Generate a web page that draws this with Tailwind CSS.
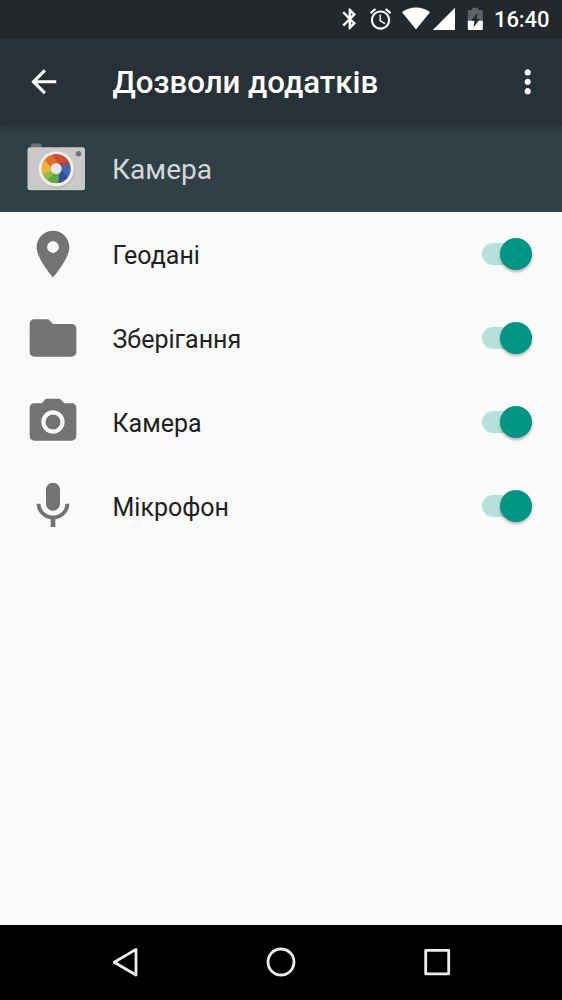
<!DOCTYPE html>
<html lang="uk">
<head>
  <meta charset="UTF-8">
  <title>Дозволи додатків</title>
  <script src="https://cdn.jsdelivr.net/npm/@tailwindcss/browser@4"></script>
</head>

<body class="w-[562px] h-[1000px] flex flex-col overflow-hidden bg-[#fafafa] font-['Roboto',sans-serif]">

  <!-- Status bar -->
  <div class="h-[38px] shrink-0 bg-[#22282b] flex items-center text-white">
    <svg class="ml-[338px] w-[224px] h-[38px]" viewBox="338 0 224 38" fill="currentColor">
      <path stroke="currentColor" stroke-width=".4" transform="translate(337.4 6.4) scale(1.04)" d="M17.71 7.71L12 2h-1v7.59L6.41 5 5 6.41 10.59 12 5 17.59 6.41 19 11 14.41V22h1l5.71-5.71-4.3-4.29 4.3-4.29zM13 5.83l1.88 1.88L13 9.59V5.83zm1.88 10.46L13 18.17v-3.76l1.88 1.88z"/>
      <path transform="translate(367.7 6.2) scale(1.07)" d="M22 5.72l-4.6-3.86-1.29 1.53 4.6 3.86L22 5.72zM7.88 3.39L6.6 1.86 2 5.71l1.29 1.53 4.59-3.85zM12.5 8H11v6l4.75 2.85.75-1.23-4-2.37V8zM12 4c-4.97 0-9 4.03-9 9s4.02 9 9 9c4.97 0 9-4.03 9-9s-4.03-9-9-9zm0 16c-3.87 0-7-3.13-7-7s3.13-7 7-7 7 3.13 7 7-3.13 7-7 7z"/>
      <path d="M416 29.6L402 12.2C406 9.2 411 7.6 416 7.6s10 1.6 14 4.6z"/>
      <path d="M455 7.8V30h-22.2z"/>
      <path class="fill-[#5d6264]" d="M467.8 11.2q0-1.2 1.2-1.2h3.2V7.7h6V10h3.400q1.2 0 1.2 1.2V22h-15z"/>
      <path d="M467.8 20.800h15v8q0 1.2-1.2 1.2H469q-1.2 0-1.2-1.2z"/>
      <path class="fill-[#22282b]" d="M477.600 12.500l-6.400 8.300h3.300l-1 6.700 6.400-8.400h-3.400z"/>
      <text x="494" y="27.3" font-size="22" font-weight="500" textLength="55.5">16:40</text>
    </svg>
  </div>

  <!-- Toolbar -->
  <header class="h-[88px] shrink-0 bg-[#273238] flex items-center text-white shadow-[0_1px_4px_rgba(0,0,0,0.3)] z-10">
    <svg class="ml-[25px] w-[37.5px] h-[37.5px] mb-px" viewBox="0 0 24 24" fill="currentColor"><path d="M20 11H7.83l5.59-5.59L12 4l-8 8 8 8 1.41-1.41L7.83 13H20v-2z"/></svg>
    <h1 class="ml-[50px] pt-0.5 text-[31.2px] font-medium leading-none whitespace-nowrap">Дозволи додатків</h1>
    <svg class="ml-auto mr-[16px] mb-px w-[37.5px] h-[37.5px]" viewBox="0 0 24 24" fill="currentColor"><path d="M12 8c1.1 0 2-.9 2-2s-.9-2-2-2-2 .9-2 2 .9 2 2 2zm0 2c-1.1 0-2 .9-2 2s.9 2 2 2 2-.9 2-2-.9-2-2-2zm0 6c-1.1 0-2 .9-2 2s.9 2 2 2 2-.9 2-2-.9-2-2-2z"/></svg>
  </header>

  <!-- App header -->
  <div class="h-[86px] shrink-0 bg-[#313f47] flex items-center">
    <svg class="ml-[25px] w-[64px] h-[64px]" viewBox="25 137 64 64">
      <path fill="#6d7377" d="M31 146v-1q0-1.500 1.500-1.500h7.500q1.500 0 1.500 1.500v3H31z"/>
      <rect x="27.500" y="148.500" width="57.500" height="43" rx="2.500" fill="#222d33" opacity=".6"/>
      <rect x="27.500" y="147.300" width="57.500" height="43" rx="2.500" fill="#c9c9c9"/>
      <circle cx="78.500" cy="153.800" r="2.700" fill="#747474"/>
      <circle cx="57.300" cy="170.500" r="17.800" fill="#b9b9b9"/>
      <circle cx="56.300" cy="169" r="17.600" fill="#eeeeee"/>
      <!-- lens blades -->
      <g transform="translate(56.200 168.700)">
        <circle r="14.400" fill="#d4543a"/>
        <path fill="#e0702f" d="M-10 -10.400A14.400 14.400 0 0 1-2-14.260L3-5.500L-5-2z"/>
        <path fill="#cf4a38" d="M-4-13.800A14.400 14.400 0 0 1 12.500-7.200L2-5.500z"/>
        <path fill="#e8872f" d="M-10-10.400L-5 1L-14.100-2.800A14.400 14.400 0 0 1-10-10.400z"/>
        <path fill="#efb53a" d="M-12.200-7.700A14.400 14.400 0 0 0-13.300 5.500L-4 4L-5-2z"/>
        <path fill="#8bbf45" d="M-13.300 5.500A14.400 14.400 0 0 0-7 12.600L0 5.500L-5 2z"/>
        <path fill="#63a846" d="M-9 11.240A14.400 14.400 0 0 0 3 14.080L5 2L-2 5z"/>
        <path fill="#3d68ba" d="M2.500 14.180A14.400 14.400 0 0 0 14.400 0L13.600-4.700L4-4L5 3z"/>
        <path fill="#354f9f" d="M2.500 14.180A14.400 14.400 0 0 0 11.500 8.670L5.300 1L3 6z"/>
        <path fill="#a9474e" d="M13.900-3.800A14.400 14.400 0 0 0 12.200-7.600L2-5.500L5-2.500z"/>
        <circle r="5.500" fill="#e6e6e6"/>
      </g>
    </svg>
    <h2 class="ml-[23px] pt-[3px] text-[28.1px] leading-none text-[#d3d7da]">Камера</h2>
  </div>

  <!-- Permissions -->
  <main class="grow text-[#212121] text-[25px] leading-none">
    <div class="h-[84px] flex items-center">
      <svg class="ml-[25px] w-[56px] h-[56px] fill-[#737373]" viewBox="0 0 24 24"><path d="M12 2C8.130 2 5 5.130 5 9c0 5.250 7 13 7 13s7-7.750 7-13c0-3.870-3.130-7-7-7zm0 9.500c-1.380 0-2.500-1.120-2.500-2.500s1.120-2.500 2.500-2.500 2.500 1.120 2.500 2.500-1.120 2.500-2.500 2.500z"/></svg>
      <span class="ml-[31.5px] pt-0.5">Геодані</span>
      <div class="ml-auto mr-[30px] w-[50px] h-[22px] flex items-center justify-end rounded-full bg-[#b8e0db]">
        <div class="w-8 h-8 shrink-0 rounded-full bg-[#009485] shadow-[0_2px_3px_rgba(0,0,0,0.3)]"></div>
      </div>
    </div>
    <div class="h-[84px] flex items-center">
      <svg class="ml-[25px] w-[56px] h-[56px] fill-[#737373]" viewBox="0 0 24 24"><path d="M10 4H4c-1.100 0-1.990.9-1.990 2L2 18c0 1.100.9 2 2 2h16c1.100 0 2-.9 2-2V8c0-1.100-.9-2-2-2h-8l-2-2z"/></svg>
      <span class="ml-[31.5px] pt-0.5">Зберігання</span>
      <div class="ml-auto mr-[30px] w-[50px] h-[22px] flex items-center justify-end rounded-full bg-[#b8e0db]">
        <div class="w-8 h-8 shrink-0 rounded-full bg-[#009485] shadow-[0_2px_3px_rgba(0,0,0,0.3)]"></div>
      </div>
    </div>
    <div class="h-[84px] flex items-center">
      <svg class="ml-[25px] w-[56px] h-[56px] fill-[#737373]" viewBox="0 0 24 24"><circle cx="12" cy="12" r="3.200"/><path d="M9 2L7.170 4H4c-1.100 0-2 .9-2 2v12c0 1.100.9 2 2 2h16c1.100 0 2-.9 2-2V6c0-1.100-.9-2-2-2h-3.170L15 2H9zm3 15c-2.760 0-5-2.240-5-5s2.240-5 5-5 5 2.240 5 5-2.240 5-5 5z"/></svg>
      <span class="ml-[31.5px] pt-0.5">Камера</span>
      <div class="ml-auto mr-[30px] w-[50px] h-[22px] flex items-center justify-end rounded-full bg-[#b8e0db]">
        <div class="w-8 h-8 shrink-0 rounded-full bg-[#009485] shadow-[0_2px_3px_rgba(0,0,0,0.3)]"></div>
      </div>
    </div>
    <div class="h-[84px] flex items-center">
      <svg class="ml-[25px] w-[56px] h-[56px] fill-[#737373]" viewBox="0 0 24 24"><path d="M12 14c1.660 0 2.990-1.340 2.990-3L15 5c0-1.660-1.340-3-3-3S9 3.340 9 5v6c0 1.660 1.340 3 3 3zm5.300-3c0 3-2.540 5.100-5.300 5.100S6.700 14 6.700 11H5c0 3.410 2.720 6.230 6 6.720V21h2v-3.280c3.280-.48 6-3.300 6-6.720h-1.700z"/></svg>
      <span class="ml-[31.5px] pt-0.5">Мікрофон</span>
      <div class="ml-auto mr-[30px] w-[50px] h-[22px] flex items-center justify-end rounded-full bg-[#b8e0db]">
        <div class="w-8 h-8 shrink-0 rounded-full bg-[#009485] shadow-[0_2px_3px_rgba(0,0,0,0.3)]"></div>
      </div>
    </div>
  </main>

  <!-- Navigation bar -->
  <nav class="h-[75px] shrink-0 bg-black flex items-center justify-between px-[109px] pb-px stroke-[#ececec]">
    <svg class="w-8 h-8" viewBox="0 0 32 32" fill="none" stroke-width="2.800" stroke-linejoin="round"><path d="M5.200 16.200L27 3.400v25.600z"/></svg>
    <svg class="w-8 h-8" viewBox="0 0 32 32" fill="none" stroke-width="2.800"><circle cx="16" cy="16" r="13"/></svg>
    <svg class="w-8 h-8" viewBox="0 0 32 32" fill="none" stroke-width="2.800" stroke-linejoin="round"><path d="M4.700 4.400h23v23.400h-23z"/></svg>
  </nav>

</body>
</html>
